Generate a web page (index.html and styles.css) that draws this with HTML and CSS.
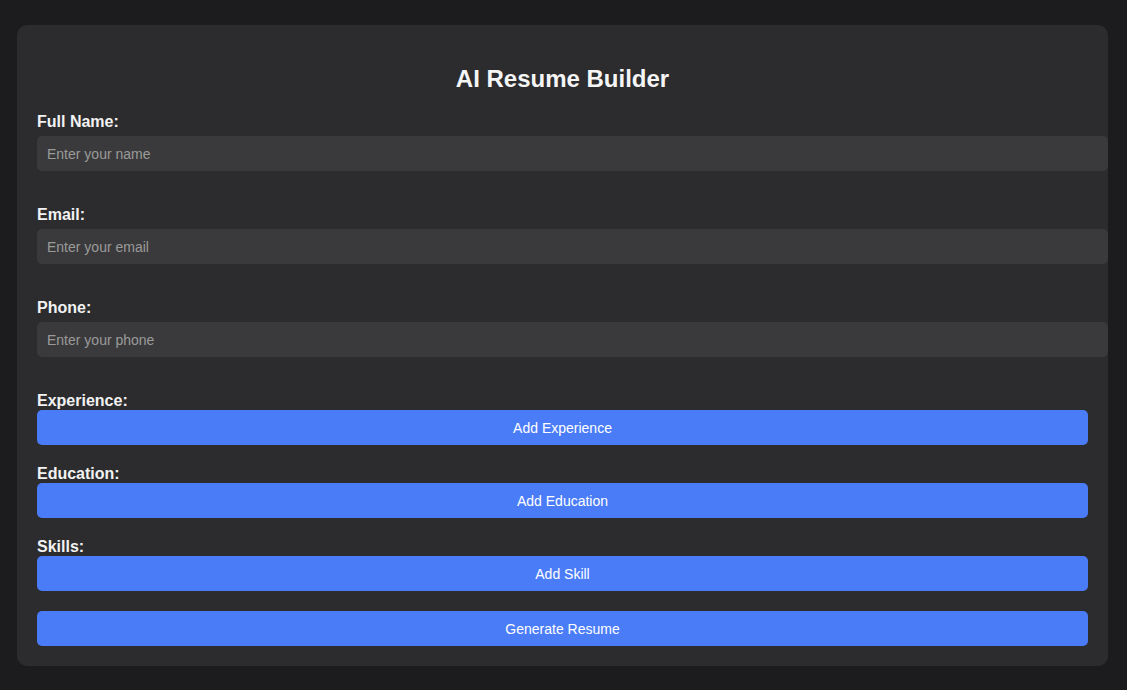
FILE: index.html
```html
<!DOCTYPE html>
<html lang="en">
<head>
    <meta charset="UTF-8">
    <meta name="viewport" content="width=device-width, initial-scale=1.0">
    <title>AI Resume Builder</title>
    <link rel="stylesheet" href="styles.css">
</head>
<body>
    <div class="container">
        <h2 class="title">AI Resume Builder</h2>

        <div class="field">
            <label for="fullName">Full Name:</label>
            <input type="text" id="fullName" placeholder="Enter your name">
        </div>

        <div class="field">
            <label for="email">Email:</label>
            <input type="email" id="email" placeholder="Enter your email">
        </div>

        <div class="field">
            <label for="phone">Phone:</label>
            <input type="text" id="phone" placeholder="Enter your phone">
        </div>

        <div class="section">
            <label class="section-label">Experience:</label>
            <div id="experienceList"></div>
            <button class="action-button">Add Experience</button>
        </div>

        <div class="section">
            <label class="section-label">Education:</label>
            <div id="educationList"></div>
            <button class="action-button">Add Education</button>
        </div>

        <div class="section">
            <label class="section-label">Skills:</label>
            <div id="skillsList"></div>
            <button class="action-button">Add Skill</button>
        </div>

        <button class="action-button">Generate Resume</button>
    </div>
</body>
</html>
```

FILE: styles.css
```css
body {
    margin: 0;
    padding: 25px 19px 25px 17px;
    background-color: #1c1c1e;
    font-family: "Liberation Sans", Arial, sans-serif;
    color: #f2f2f2;
}

.container {
    padding: 20px;
    background-color: #2c2c2e;
    border-radius: 10px;
}

.title {
    margin: 20px 0;
    font-size: 24px;
    line-height: 28px;
    text-align: center;
    color: #f5f5f5;
}

.field {
    margin-bottom: 35px;
}

.field label {
    display: block;
    margin-bottom: 5px;
    font-size: 16px;
    line-height: 18px;
    font-weight: bold;
}

.field input {
    display: block;
    width: 100%;
    height: 15px;
    padding: 10px;
    border: none;
    border-radius: 5px;
    background-color: #3a3a3c;
    color: #f2f2f2;
    font-family: inherit;
    font-size: 14px;
    outline: none;
}

.field input::placeholder {
    color: #9a9a9a;
}

.section {
    margin-bottom: 20px;
}

.section-label {
    display: block;
    font-size: 16px;
    line-height: 18px;
    font-weight: bold;
}

.action-button {
    display: block;
    width: 100%;
    height: 35px;
    padding: 0;
    border: none;
    border-radius: 5px;
    background-color: #4a7cf7;
    color: #ffffff;
    font-family: inherit;
    font-size: 14px;
    cursor: pointer;
}

.action-button:hover {
    background-color: #3a6ae0;
}
```
